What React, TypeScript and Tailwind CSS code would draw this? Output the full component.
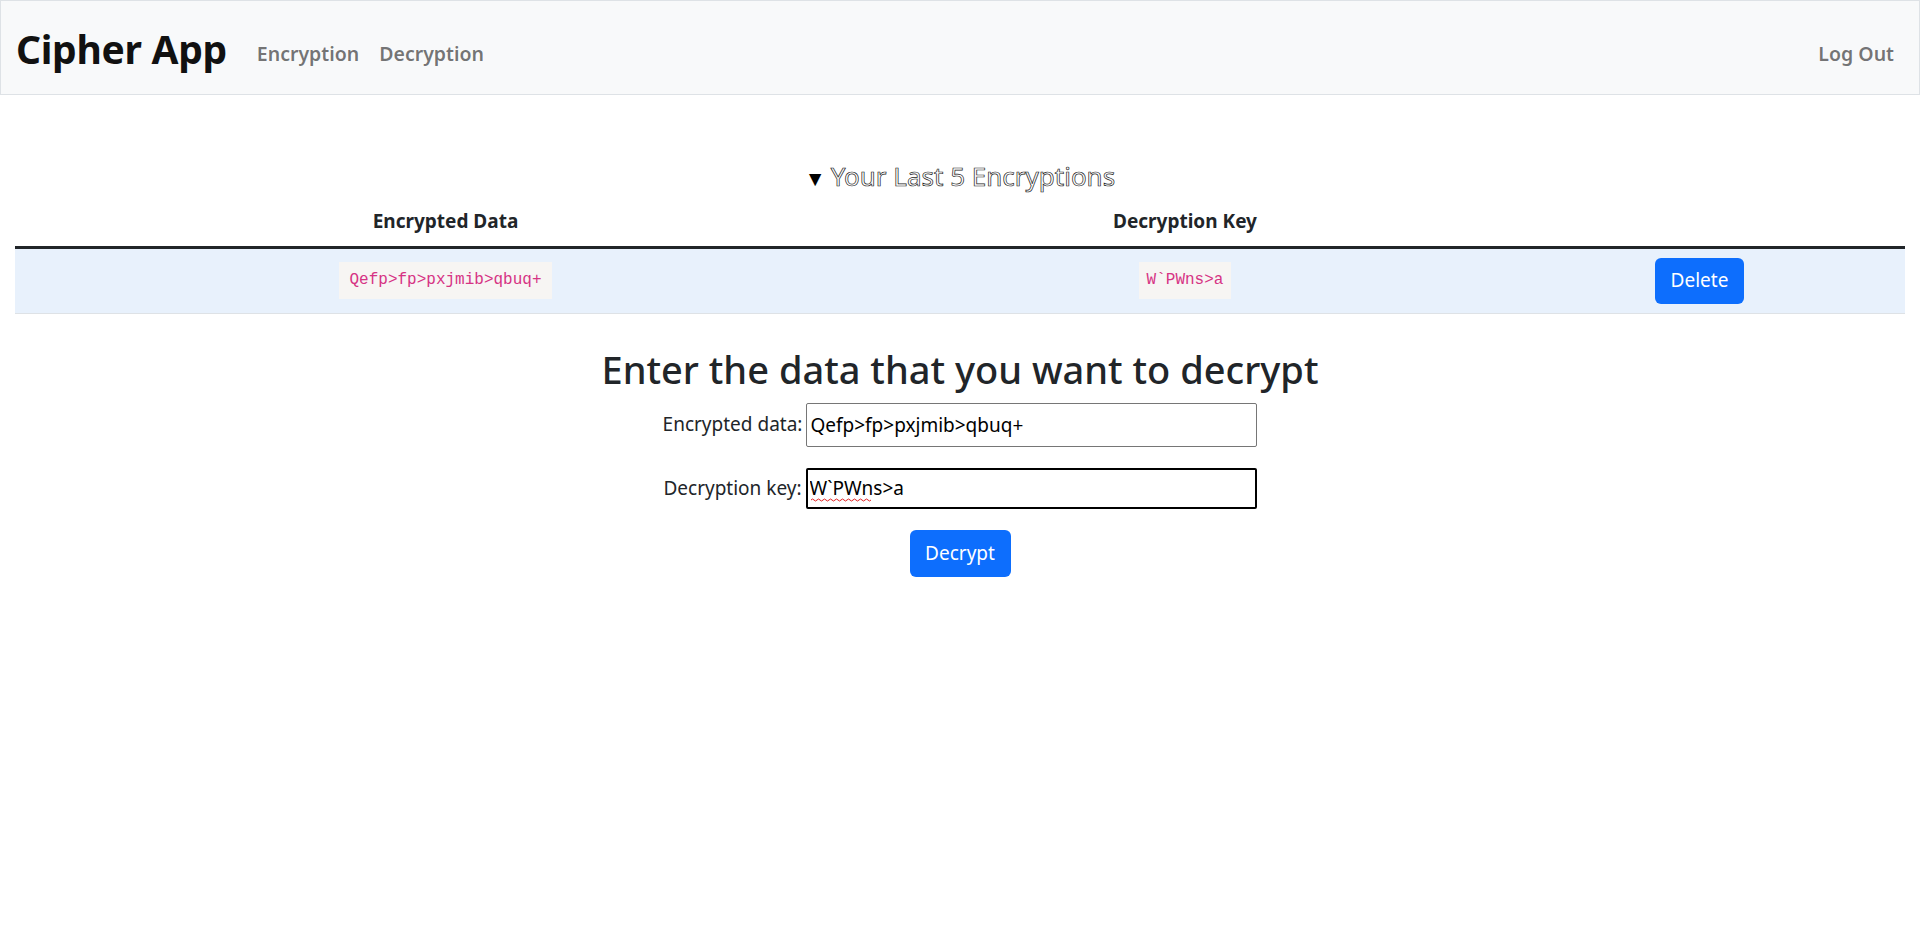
import React from "react";

const FONT = { fontFamily: '"Noto Sans", "Open Sans", sans-serif' };

export default function App() {
  return (
    <div className="min-h-screen bg-white text-[#212529] text-[20px]" style={FONT}>
      <nav className="h-[95px] border border-[#dee2e6] bg-[#f8f9fa] flex items-center px-[15px]">
        <a className="text-[39px] font-bold text-[#111] leading-none mt-[2px] mr-[20px] tracking-[-0.3px]">Cipher App</a>
        <div className="flex items-center mt-[12px]">
          <a className="px-[10px] text-[19.5px] font-semibold text-[rgba(0,0,0,0.55)]">Encryption</a>
          <a className="px-[10px] text-[19.5px] font-semibold text-[rgba(0,0,0,0.55)]">Decryption</a>
        </div>
        <div className="flex-1" />
        <a className="px-[10px] text-[19.5px] font-semibold text-[rgba(0,0,0,0.55)] mt-[12px]">Log Out</a>
      </nav>

      <main className="px-[15px]">
        <details open className="mt-[62px]">
          <summary className="text-center text-[26px] leading-[38px] list-none cursor-pointer">
            <span className="text-[21px] text-black mr-[5px]">▼</span>
            <span className="text-white [-webkit-text-stroke:0.7px_#222]">Your Last 5 Encryptions</span>
          </summary>
          <table className="w-full border-collapse">
            <thead>
              <tr className="border-b-[3px] border-[#212529]">
                <th className="w-[861px] h-[50px] text-center font-bold text-[19px]">Encrypted Data</th>
                <th className="w-[618px] h-[50px] text-center font-bold text-[19px]">Decryption Key</th>
                <th className="h-[50px]"></th>
              </tr>
            </thead>
            <tbody>
              <tr className="bg-[#e8f1fc] border-b border-[#dee2e6]">
                <td className="h-[66px] text-center align-middle">
                  <code className="inline-block bg-[#f7f5f3] text-[#d63384] px-[10px] py-[8px] leading-[21px] text-[16px]" style={{ fontFamily: '"Liberation Mono", monospace' }}>
                    Qefp&gt;fp&gt;pxjmib&gt;qbuq+
                  </code>
                </td>
                <td className="h-[66px] text-center align-middle">
                  <code className="inline-block bg-[#f7f5f3] text-[#d63384] px-[8px] py-[8px] leading-[21px] text-[16px]" style={{ fontFamily: '"Liberation Mono", monospace' }}>
                    W`PWns&gt;a
                  </code>
                </td>
                <td className="h-[66px] text-center align-middle">
                  <button className="bg-[#0d6efd] text-white rounded-[6px] w-[89px] h-[46px] text-[19px]">Delete</button>
                </td>
              </tr>
            </tbody>
          </table>
        </details>

        <h2 className="text-center text-[38px] font-medium leading-[48px] mt-[31px] mb-[10px]">
          Enter the data that you want to decrypt
        </h2>

        <div className="flex flex-col items-center">
          <div className="flex items-center justify-center gap-[4px]">
            <label className="text-[19px]">Encrypted data:</label>
            <input
              readOnly
              value="Qefp>fp>pxjmib>qbuq+"
              className="w-[451px] h-[44px] border border-[#767676] rounded-[2px] px-[3px] text-[19px] text-black outline-none"
              style={FONT}
            />
          </div>
          <div className="flex items-center justify-center gap-[4px] mt-[21px]">
            <label className="text-[19px]">Decryption key:</label>
            <div className="relative">
              <input
                readOnly
                value="W`PWns>a"
                className="w-[451px] h-[41px] border-2 border-black rounded-[2px] px-[2px] text-[19px] text-black outline-none"
                style={FONT}
              />
              <svg className="absolute left-[5px] top-[30px]" width="60" height="4" viewBox="0 0 60 4">
                <path d="M0 2 Q1.5 0 3 2 T6 2 T9 2 T12 2 T15 2 T18 2 T21 2 T24 2 T27 2 T30 2 T33 2 T36 2 T39 2 T42 2 T45 2 T48 2 T51 2 T54 2 T57 2 T60 2" fill="none" stroke="#e02020" strokeWidth="1" />
              </svg>
            </div>
          </div>
          <button className="mt-[21px] bg-[#0d6efd] text-white rounded-[6px] w-[101px] h-[47px] text-[19px]">Decrypt</button>
        </div>
      </main>
    </div>
  );
}
